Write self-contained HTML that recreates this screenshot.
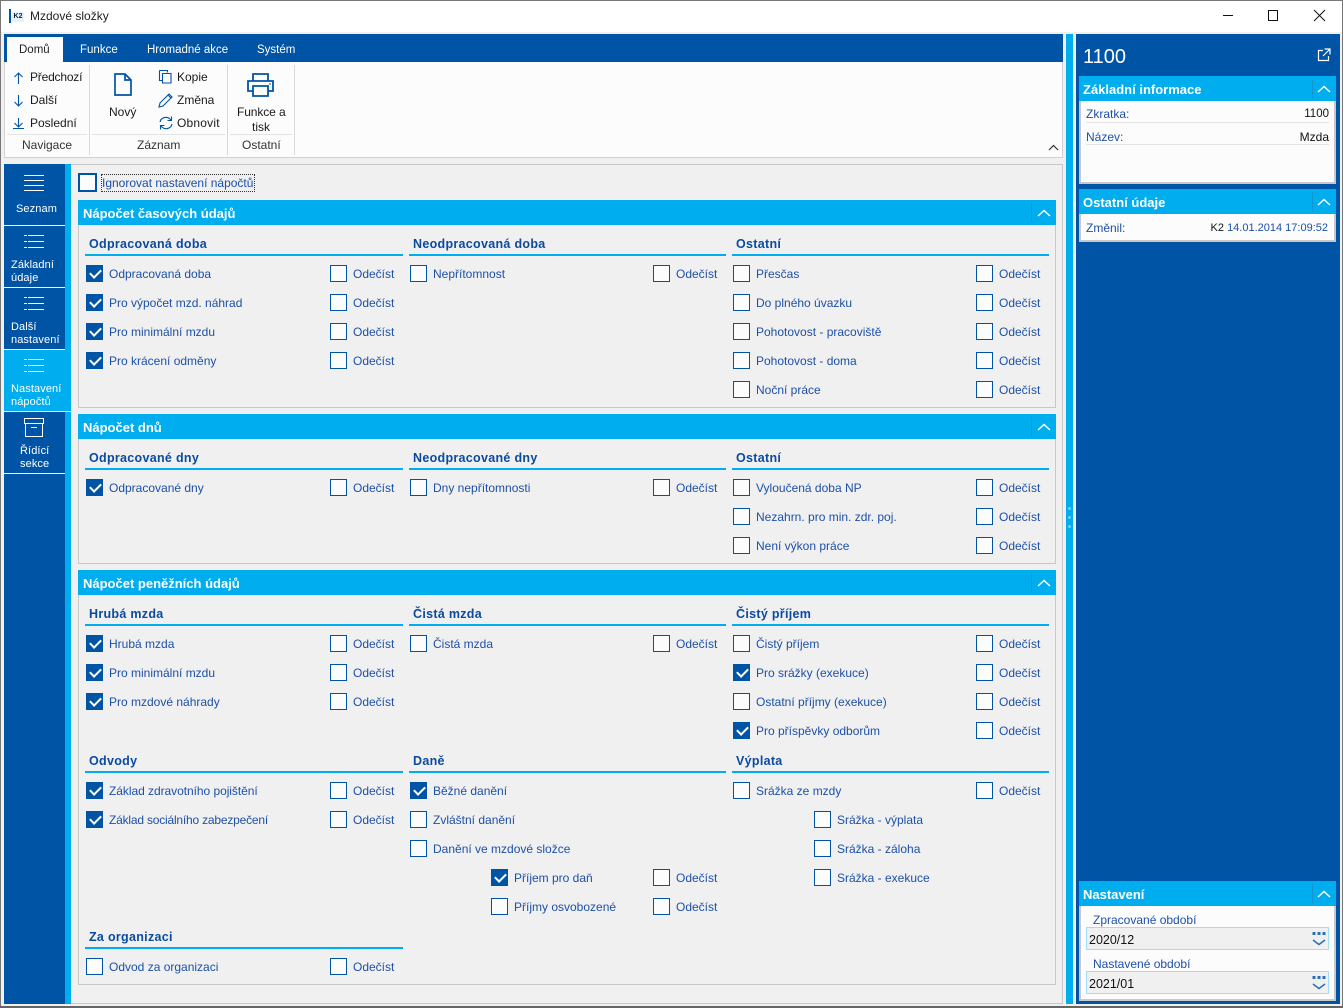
<!DOCTYPE html>
<html lang="cs"><head><meta charset="utf-8"><title>Mzdové složky</title>
<style>
*{box-sizing:border-box}
html,body{margin:0;padding:0}
body{width:1343px;height:1008px;position:relative;overflow:hidden;background:#f0f0f0;font:12px/16px "Liberation Sans",sans-serif;letter-spacing:0;color:#1a1a1a}
div,svg,span,i{position:absolute}
.t{white-space:nowrap;height:16px}
.bar{background:#00adef;height:25px;color:#fff;font-weight:bold;line-height:27px;padding-left:5px;font-size:13px}
.sec{background:#f0f0f0;border:1px solid #c8c8c8;border-top:0;left:78px;width:978px}
.sep{width:1px;height:19px;top:3px;background:#1495cf}
.h{color:#0a4ba0;font-weight:bold;white-space:nowrap;height:16px;font-size:12.5px;letter-spacing:.3px;margin-top:1px}
.l{background:#00adef;height:2px;width:318px}
.r{height:17px;width:320px}
.r i{display:block;width:17px;height:17px;border:1px solid #0054a6;background:#fcfcfc;left:0;top:0}
.r i.on{background:#0054a6}
.r i.on:after{content:"";position:absolute;left:3px;top:3px;width:9px;height:5px;border-left:2px solid #fff;border-bottom:2px solid #fff;transform:rotate(-45deg)}
.r span{left:23px;top:1px;color:#1d50a8;white-space:nowrap;line-height:16px}
.r i.o{left:243px}
.r span.o{left:266px}
.r.x i.o{left:244px}
.r.x span.o{left:267px}
.nav{left:4px;width:61px;height:61px;color:#fff;background:#0054a6}
.nav .t{color:#fff;font-size:11px;letter-spacing:.1px}
.hl{height:1px;background:#e4e4e4}
.b{color:#1a1a1a}
.g{color:#333}
.side{left:1079px;width:257px;background:#fcfcfc;border:2px solid #c8c8c8;border-top:0}
.f{color:#1d50a8;white-space:nowrap;height:16px}
.rt{color:#111;white-space:nowrap;height:16px;text-align:right;right:14px}
.inp{left:1086px;width:243px;height:23px;background:#f0f0f0;border:1px solid #9fdcf7;line-height:24px;padding-left:2px;color:#111;font-size:12.5px}
.tab{font-size:11.5px;color:#fff}
</style></head><body>

<!-- title bar -->
<div style="left:0;top:0;width:1343px;height:1px;background:#777"></div>
<div style="left:0;top:1px;width:1343px;height:31px;background:#fff"></div>
<div style="left:9px;top:9px;width:2px;height:14px;background:#0054a6"></div>
<div style="left:12px;top:12px;width:12px;height:10px;background:#e6f2fb;color:#123;font:bold 7px/9px 'Liberation Sans',sans-serif;text-align:center">K2</div>
<div class="t" style="left:30px;top:8px;color:#222">Mzdové složky</div>
<svg style="left:1215px;top:5px" width="120" height="22" fill="none" stroke="#111" stroke-width="1"><path d="M8 10.500h10M53.500 5.500h9v10h-9zM99 5l11 11M110 5l-11 11"/></svg>

<!-- ribbon -->
<div style="left:4px;top:34px;width:1059px;height:28px;background:#0054a6"></div>
<div style="left:7px;top:37px;width:56px;height:25px;background:#fcfcfc"></div>
<div class="t" style="left:19px;top:42px;color:#222;font-size:11.5px">Domů</div>
<div class="t tab" style="left:80px;top:42px">Funkce</div>
<div class="t tab" style="left:147px;top:42px">Hromadné akce</div>
<div class="t tab" style="left:257px;top:42px">Systém</div>
<div style="left:4px;top:62px;width:1059px;height:96px;background:#fcfcfc;border:1px solid #d2d2d2;border-top:0"></div>
<div style="left:89px;top:65px;width:1px;height:90px;background:#d8d8d8"></div>
<div style="left:227px;top:65px;width:1px;height:90px;background:#d8d8d8"></div>
<div style="left:294px;top:65px;width:1px;height:90px;background:#d8d8d8"></div>
<div class="hl" style="left:7px;top:134px;width:80px"></div>
<div class="hl" style="left:92px;top:134px;width:133px"></div>
<div class="hl" style="left:230px;top:134px;width:62px"></div>
<svg style="left:13px;top:70px" width="14" height="62" fill="none" stroke="#0054a6" stroke-width="1.100"><path d="M5.500 3v11M1.500 7l4-4 4 4M5.500 25v11M1.500 32l4 4 4-4M5.500 48v9M1.500 53l4 4 4-4M0 58.500h11"/></svg>
<div class="t b" style="left:30px;top:69px;letter-spacing:-.2px">Předchozí</div>
<div class="t b" style="left:30px;top:92px">Další</div>
<div class="t b" style="left:30px;top:115px">Poslední</div>
<svg style="left:113px;top:72px" width="20" height="26" fill="none" stroke="#0054a6" stroke-width="1.700"><path d="M2 2h10l6 6v15H2zM12 2v6h6"/></svg>
<div class="t b" style="left:109px;top:104px">Nový</div>
<svg style="left:158px;top:69px" width="16" height="16" fill="none" stroke="#0054a6" stroke-width="1.100"><path d="M1.500 1.500h8v2M1.500 1.500v10h3M4.500 4.500h8.500v9.500h-8.500z"/></svg>
<svg style="left:158px;top:92px" width="16" height="16" fill="none" stroke="#0054a6" stroke-width="1.100"><path d="M2 11l9-9 3 3-9 9-4 1zM10 3l3 3"/></svg>
<svg style="left:158px;top:115px" width="16" height="16" fill="none" stroke="#0054a6" stroke-width="1.100"><path d="M2 7a6 6 0 0 1 10-3l1.500 1.500M13.500 1.500v4h-4M14 9a6 6 0 0 1-10 3L2.500 10.500M2.500 14.500v-4h4"/></svg>
<div class="t b" style="left:177px;top:69px">Kopie</div>
<div class="t b" style="left:177px;top:92px">Změna</div>
<div class="t b" style="left:177px;top:115px;letter-spacing:.2px">Obnovit</div>
<svg style="left:246px;top:72px" width="29" height="26" fill="none" stroke="#0054a6" stroke-width="1.800"><path d="M7 9V2h15v7M7 19H2V9h25v10h-5M7 14h15v10H7z"/><path d="M23 12h2" stroke-width="1"/></svg>
<div class="t b" style="left:237px;top:104px;letter-spacing:-.1px">Funkce a</div>
<div class="t b" style="left:252px;top:119px">tisk</div>
<div class="t g" style="left:22px;top:137px">Navigace</div>
<div class="t g" style="left:137px;top:137px">Záznam</div>
<div class="t g" style="left:242px;top:137px">Ostatní</div>
<svg style="left:1048px;top:144px" width="11" height="7" fill="none" stroke="#333" stroke-width="1.200"><path d="M1 6l4.500-4.500L10 6"/></svg>

<!-- left rail -->
<div style="left:4px;top:164px;width:61px;height:840px;background:#0054a6"></div>
<div style="left:65px;top:164px;width:6px;height:840px;background:#00adef"></div>
<div style="left:71px;top:164px;width:992px;height:840px;border:1px solid #c8c8c8;border-left:0;background:#f0f0f0"></div>

<div class="nav" style="top:164px;height:61px">
<svg style="left:20px;top:9px" width="22" height="20" stroke="#fff" stroke-width="1"><path d="M0 2.500h20M0 7.500h20M0 12.500h20M0 17.500h20"/></svg>
<div class="t" style="left:12px;top:37px">Seznam</div></div>
<div style="left:4px;top:225px;width:61px;height:1px;background:#fff"></div>
<div class="nav" style="top:226px">
<svg style="left:20px;top:6px" width="22" height="18" stroke="#fff" stroke-width="1"><path d="M0 3.500h3M4 3.500h16M0 9.500h3M4 9.500h16M0 15.500h3M4 15.500h16"/></svg>
<div class="t" style="left:7px;top:31px">Základní</div><div class="t" style="left:7px;top:44px">údaje</div></div>
<div style="left:4px;top:287px;width:61px;height:1px;background:#fff"></div>
<div class="nav" style="top:288px">
<svg style="left:20px;top:6px" width="22" height="18" stroke="#fff" stroke-width="1"><path d="M0 3.500h3M4 3.500h16M0 9.500h3M4 9.500h16M0 15.500h3M4 15.500h16"/></svg>
<div class="t" style="left:7px;top:31px">Další</div><div class="t" style="left:7px;top:44px">nastavení</div></div>
<div style="left:4px;top:349px;width:61px;height:1px;background:#fff"></div>
<div class="nav" style="top:350px;background:#00adef;width:67px">
<svg style="left:20px;top:6px" width="22" height="18" stroke="#fff" stroke-width="1"><path d="M0 3.500h3M4 3.500h16M0 9.500h3M4 9.500h16M0 15.500h3M4 15.500h16"/></svg>
<div class="t" style="left:7px;top:31px">Nastavení</div><div class="t" style="left:7px;top:44px">nápočtů</div></div>
<div style="left:4px;top:411px;width:67px;height:1px;background:#fff"></div>
<div class="nav" style="top:412px">
<svg style="left:20px;top:6px" width="22" height="20" fill="none" stroke="#fff" stroke-width="1"><path d="M.5.500h19v5H.5zM1.500 5.500v13h17v-13M7 9.500h6"/></svg>
<div class="t" style="left:16px;top:31px">Řídící</div><div class="t" style="left:16px;top:44px">sekce</div></div>
<div style="left:4px;top:473px;width:61px;height:1px;background:#fff"></div>

<!-- ignore -->
<div style="left:78px;top:173px;width:19px;height:19px;border:2px solid #0054a6;background:#fcfcfc"></div>
<div class="t" style="left:101px;top:174px;width:154px;height:18px;outline:1px dotted #333;outline-offset:-1px;color:#1d50a8;padding:1px 0 0 1px">Ignorovat nastavení nápočtů</div>

<!-- section 1 -->
<div class="sec" style="top:225px;height:183px"></div>
<div class="bar" style="left:78px;top:200px;width:978px">Nápočet časových údajů<div class="sep" style="left:953px"></div><svg style="left:959px;top:9px" width="14" height="8" fill="none" stroke="#fff" stroke-width="1.500"><path d="M1 7l6-5.500L13 7"/></svg></div>
<div class="h" style="left:89px;top:235px">Odpracovaná doba</div><div class="l" style="left:85px;top:254px"></div>
<div class="h" style="left:413px;top:235px">Neodpracovaná doba</div><div class="l" style="left:409px;top:254px;width:317px"></div>
<div class="h" style="left:736px;top:235px">Ostatní</div><div class="l" style="left:732px;top:254px;width:317px"></div>

<div class="r x" style="left:86px;top:265px"><i class="on"></i><span>Odpracovaná doba</span><i class="o"></i><span class="o">Odečíst</span></div>
<div class="r x" style="left:86px;top:294px"><i class="on"></i><span>Pro výpočet mzd. náhrad</span><i class="o"></i><span class="o">Odečíst</span></div>
<div class="r x" style="left:86px;top:323px"><i class="on"></i><span>Pro minimální mzdu</span><i class="o"></i><span class="o">Odečíst</span></div>
<div class="r x" style="left:86px;top:352px"><i class="on"></i><span>Pro krácení odměny</span><i class="o"></i><span class="o">Odečíst</span></div>
<div class="r" style="left:410px;top:265px"><i></i><span>Nepřítomnost</span><i class="o"></i><span class="o">Odečíst</span></div>
<div class="r" style="left:733px;top:265px"><i></i><span>Přesčas</span><i class="o"></i><span class="o">Odečíst</span></div>
<div class="r" style="left:733px;top:294px"><i></i><span>Do plného úvazku</span><i class="o"></i><span class="o">Odečíst</span></div>
<div class="r" style="left:733px;top:323px"><i></i><span>Pohotovost - pracoviště</span><i class="o"></i><span class="o">Odečíst</span></div>
<div class="r" style="left:733px;top:352px"><i></i><span>Pohotovost - doma</span><i class="o"></i><span class="o">Odečíst</span></div>
<div class="r" style="left:733px;top:381px"><i></i><span>Noční práce</span><i class="o"></i><span class="o">Odečíst</span></div>

<!-- section 2 -->
<div class="sec" style="top:439px;height:125px"></div>
<div class="bar" style="left:78px;top:414px;width:978px">Nápočet dnů<div class="sep" style="left:953px"></div><svg style="left:959px;top:9px" width="14" height="8" fill="none" stroke="#fff" stroke-width="1.500"><path d="M1 7l6-5.500L13 7"/></svg></div>
<div class="h" style="left:89px;top:449px">Odpracované dny</div><div class="l" style="left:85px;top:468px"></div>
<div class="h" style="left:413px;top:449px">Neodpracované dny</div><div class="l" style="left:409px;top:468px;width:317px"></div>
<div class="h" style="left:736px;top:449px">Ostatní</div><div class="l" style="left:732px;top:468px;width:317px"></div>
<div class="r x" style="left:86px;top:479px"><i class="on"></i><span>Odpracované dny</span><i class="o"></i><span class="o">Odečíst</span></div>
<div class="r" style="left:410px;top:479px"><i></i><span>Dny nepřítomnosti</span><i class="o"></i><span class="o">Odečíst</span></div>
<div class="r" style="left:733px;top:479px"><i></i><span>Vyloučená doba NP</span><i class="o"></i><span class="o">Odečíst</span></div>
<div class="r" style="left:733px;top:508px"><i></i><span>Nezahrn. pro min. zdr. poj.</span><i class="o"></i><span class="o">Odečíst</span></div>
<div class="r" style="left:733px;top:537px"><i></i><span>Není výkon práce</span><i class="o"></i><span class="o">Odečíst</span></div>

<!-- section 3 -->
<div class="sec" style="top:595px;height:390px"></div>
<div class="bar" style="left:78px;top:570px;width:978px">Nápočet peněžních údajů<div class="sep" style="left:953px"></div><svg style="left:959px;top:9px" width="14" height="8" fill="none" stroke="#fff" stroke-width="1.500"><path d="M1 7l6-5.500L13 7"/></svg></div>
<div class="h" style="left:89px;top:605px">Hrubá mzda</div><div class="l" style="left:85px;top:624px"></div>
<div class="h" style="left:413px;top:605px">Čistá mzda</div><div class="l" style="left:409px;top:624px;width:317px"></div>
<div class="h" style="left:736px;top:605px">Čistý příjem</div><div class="l" style="left:732px;top:624px;width:317px"></div>
<div class="r x" style="left:86px;top:635px"><i class="on"></i><span>Hrubá mzda</span><i class="o"></i><span class="o">Odečíst</span></div>
<div class="r x" style="left:86px;top:664px"><i class="on"></i><span>Pro minimální mzdu</span><i class="o"></i><span class="o">Odečíst</span></div>
<div class="r x" style="left:86px;top:693px"><i class="on"></i><span>Pro mzdové náhrady</span><i class="o"></i><span class="o">Odečíst</span></div>
<div class="r" style="left:410px;top:635px"><i></i><span>Čistá mzda</span><i class="o"></i><span class="o">Odečíst</span></div>
<div class="r" style="left:733px;top:635px"><i></i><span>Čistý příjem</span><i class="o"></i><span class="o">Odečíst</span></div>
<div class="r" style="left:733px;top:664px"><i class="on"></i><span>Pro srážky (exekuce)</span><i class="o"></i><span class="o">Odečíst</span></div>
<div class="r" style="left:733px;top:693px"><i></i><span>Ostatní příjmy (exekuce)</span><i class="o"></i><span class="o">Odečíst</span></div>
<div class="r" style="left:733px;top:722px"><i class="on"></i><span>Pro příspěvky odborům</span><i class="o"></i><span class="o">Odečíst</span></div>

<div class="h" style="left:89px;top:752px">Odvody</div><div class="l" style="left:85px;top:771px"></div>
<div class="h" style="left:413px;top:752px">Daně</div><div class="l" style="left:409px;top:771px;width:317px"></div>
<div class="h" style="left:736px;top:752px">Výplata</div><div class="l" style="left:732px;top:771px;width:317px"></div>
<div class="r x" style="left:86px;top:782px"><i class="on"></i><span style="letter-spacing:-.05px">Základ zdravotního pojištění</span><i class="o"></i><span class="o">Odečíst</span></div>
<div class="r x" style="left:86px;top:811px"><i class="on"></i><span style="letter-spacing:-.2px">Základ sociálního zabezpečení</span><i class="o"></i><span class="o">Odečíst</span></div>
<div class="r" style="left:410px;top:782px"><i class="on"></i><span>Běžné danění</span></div>
<div class="r" style="left:410px;top:811px"><i></i><span>Zvláštní danění</span></div>
<div class="r" style="left:410px;top:840px"><i></i><span>Danění ve mzdové složce</span></div>
<div class="r" style="left:491px;top:869px"><i class="on"></i><span>Příjem pro daň</span><i class="o" style="left:162px"></i><span class="o" style="left:185px">Odečíst</span></div>
<div class="r" style="left:491px;top:898px"><i></i><span>Příjmy osvobozené</span><i class="o" style="left:162px"></i><span class="o" style="left:185px">Odečíst</span></div>
<div class="r" style="left:733px;top:782px"><i></i><span>Srážka ze mzdy</span><i class="o"></i><span class="o">Odečíst</span></div>
<div class="r" style="left:814px;top:811px"><i></i><span>Srážka - výplata</span></div>
<div class="r" style="left:814px;top:840px"><i></i><span>Srážka - záloha</span></div>
<div class="r" style="left:814px;top:869px"><i></i><span>Srážka - exekuce</span></div>
<div class="h" style="left:89px;top:928px">Za organizaci</div><div class="l" style="left:85px;top:947px"></div>
<div class="r x" style="left:86px;top:958px"><i></i><span>Odvod za organizaci</span><i class="o"></i><span class="o">Odečíst</span></div>

<!-- splitter -->
<div style="left:1066px;top:34px;width:7px;height:970px;background:#00adef"></div>
<div style="left:1068px;top:507px;width:3px;height:3px;border-radius:2px;background:#6fd0f5"></div>
<div style="left:1068px;top:516px;width:3px;height:3px;border-radius:2px;background:#6fd0f5"></div>
<div style="left:1068px;top:525px;width:3px;height:3px;border-radius:2px;background:#6fd0f5"></div>

<!-- right panel -->
<div style="left:1076px;top:34px;width:264px;height:970px;background:#0054a6"></div>
<div class="t" style="left:1083px;top:45px;height:24px;color:#fff;font-size:20px;line-height:24px">1100</div>
<svg style="left:1317px;top:48px" width="14" height="14" fill="none" stroke="#fff" stroke-width="1.200"><path d="M6 2.500H1.500v10h10V8M7.500 1h5.500v5.500M13 1L6 8"/></svg>

<div class="side" style="top:101px;height:83px"></div>
<div class="bar" style="left:1079px;top:76px;width:257px;padding-left:4px">Základní informace<div class="sep" style="left:233px"></div><svg style="left:238px;top:9px" width="14" height="8" fill="none" stroke="#fff" stroke-width="1.500"><path d="M1 7l6-5.500L13 7"/></svg></div>
<div class="f" style="left:1086px;top:106px">Zkratka:</div>
<div class="rt" style="top:106px;font-size:11.5px">1100</div>
<div class="hl" style="left:1086px;top:122px;width:243px"></div>
<div class="f" style="left:1086px;top:129px">Název:</div>
<div class="rt" style="top:129px">Mzda</div>
<div class="hl" style="left:1086px;top:144px;width:243px"></div>

<div class="side" style="top:214px;height:28px"></div>
<div class="bar" style="left:1079px;top:189px;width:257px;padding-left:4px">Ostatní údaje<div class="sep" style="left:233px"></div><svg style="left:238px;top:9px" width="14" height="8" fill="none" stroke="#fff" stroke-width="1.500"><path d="M1 7l6-5.500L13 7"/></svg></div>
<div class="f" style="left:1086px;top:220px">Změnil:</div>
<div class="rt" style="top:220px;right:15px;font-size:11px"><span style="position:static;color:#111">K2</span> <span style="position:static;color:#1d50a8">14.01.2014 17:09:52</span></div>

<div class="side" style="top:906px;height:95px;background:#fcfcfc"></div>
<div class="bar" style="left:1079px;top:881px;width:257px;padding-left:4px">Nastavení<div class="sep" style="left:233px"></div><svg style="left:238px;top:9px" width="14" height="8" fill="none" stroke="#fff" stroke-width="1.500"><path d="M1 7l6-5.500L13 7"/></svg></div>
<div class="f" style="left:1093px;top:912px">Zpracované období</div>
<div class="inp" style="top:927px">2020/12<svg style="left:225px;top:4px" width="14" height="14" fill="none" stroke="#2a6fb8" stroke-width="1.500"><path d="M1 8l6 4.500L13 8"/><path d="M.5 1.500h3M5.500 1.500h3M10.500 1.500h3" stroke-width="3"/></svg></div>
<div class="f" style="left:1093px;top:956px">Nastavené období</div>
<div class="inp" style="top:971px">2021/01<svg style="left:225px;top:4px" width="14" height="14" fill="none" stroke="#2a6fb8" stroke-width="1.500"><path d="M1 8l6 4.500L13 8"/><path d="M.5 1.500h3M5.500 1.500h3M10.500 1.500h3" stroke-width="3"/></svg></div>

<!-- window edges -->
<div style="left:0;top:0;width:1px;height:1008px;background:#777"></div>
<div style="left:1342px;top:0;width:1px;height:1008px;background:#777"></div>
<div style="left:0;top:1006px;width:1343px;height:2px;background:#666"></div>
</body></html>
